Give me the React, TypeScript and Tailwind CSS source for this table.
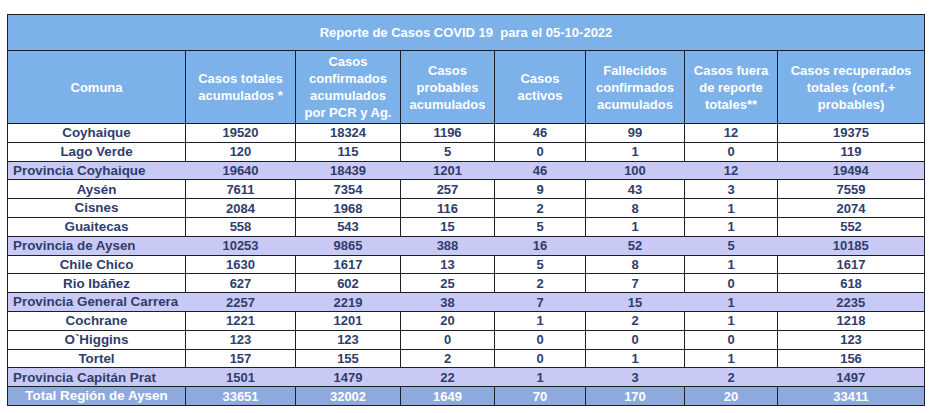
import React from "react";

type Row = {
  name: string;
  kind: "comuna" | "prov" | "total";
  v: number[];
};

const rows: Row[] = [
  { name: "Coyhaique", kind: "comuna", v: [19520, 18324, 1196, 46, 99, 12, 19375] },
  { name: "Lago Verde", kind: "comuna", v: [120, 115, 5, 0, 1, 0, 119] },
  { name: "Provincia Coyhaique", kind: "prov", v: [19640, 18439, 1201, 46, 100, 12, 19494] },
  { name: "Aysén", kind: "comuna", v: [7611, 7354, 257, 9, 43, 3, 7559] },
  { name: "Cisnes", kind: "comuna", v: [2084, 1968, 116, 2, 8, 1, 2074] },
  { name: "Guaitecas", kind: "comuna", v: [558, 543, 15, 5, 1, 1, 552] },
  { name: "Provincia de Aysen", kind: "prov", v: [10253, 9865, 388, 16, 52, 5, 10185] },
  { name: "Chile Chico", kind: "comuna", v: [1630, 1617, 13, 5, 8, 1, 1617] },
  { name: "Rio Ibáñez", kind: "comuna", v: [627, 602, 25, 2, 7, 0, 618] },
  { name: "Provincia General Carrera", kind: "prov", v: [2257, 2219, 38, 7, 15, 1, 2235] },
  { name: "Cochrane", kind: "comuna", v: [1221, 1201, 20, 1, 2, 1, 1218] },
  { name: "O`Higgins", kind: "comuna", v: [123, 123, 0, 0, 0, 0, 123] },
  { name: "Tortel", kind: "comuna", v: [157, 155, 2, 0, 1, 1, 156] },
  { name: "Provincia Capitán Prat", kind: "prov", v: [1501, 1479, 22, 1, 3, 2, 1497] },
  { name: "Total Región de Aysen", kind: "total", v: [33651, 32002, 1649, 70, 170, 20, 33411] },
];

const headers = [
  ["Comuna"],
  ["Casos totales", "acumulados *"],
  ["Casos", "confirmados", "acumulados", "por PCR y Ag."],
  ["Casos", "probables", "acumulados"],
  ["Casos", "activos"],
  ["Fallecidos", "confirmados", "acumulados"],
  ["Casos fuera", "de reporte", "totales**"],
  ["Casos recuperados", "totales (conf.+", "probables)"],
];

const widths = [178, 110, 105, 94, 91, 99, 93, 147];

export default function App() {
  return (
    <div className="w-[939px] h-[413px] bg-white pt-[14px] pl-[7px]" style={{ fontFamily: '"Liberation Sans", Arial, sans-serif' }}>
      <table className="table-fixed border-collapse w-[917px] font-bold text-[13px]">
        <colgroup>
          {widths.map((w, i) => (
            <col key={i} style={{ width: w }} />
          ))}
        </colgroup>
        <thead>
          <tr className="h-[36px] bg-[#7db1ea]">
            <th colSpan={8} className="border border-[#1c1f2a] text-white text-center font-bold whitespace-pre">
              {"Reporte de Casos COVID 19  para el 05-10-2022"}
            </th>
          </tr>
          <tr className="h-[73px] bg-[#7db1ea]">
            {headers.map((h, i) => (
              <th key={i} className="border border-[#1c1f2a] text-white text-center font-bold leading-[17px] px-1">
                {h.map((l, j) => (
                  <div key={j}>{l}</div>
                ))}
              </th>
            ))}
          </tr>
        </thead>
        <tbody>
          {rows.map((r, i) => {
            const isProv = r.kind === "prov";
            const isTotal = r.kind === "total";
            const bg = isProv ? "bg-[#c9c9f6]" : isTotal ? "bg-[#8eaadd]" : "bg-white";
            const txt = isTotal ? "text-white" : "text-[#2f3d6c]";
            return (
              <tr key={i} className={`h-[18.8px] leading-none ${bg} ${txt}`}>
                <td
                  className={`border-y border-l border-[#1c1f2a] text-[13.4px] ${isProv ? "text-left pl-[5px] border-r-0" : "text-center border-r"}`}
                >
                  {r.name}
                </td>
                {r.v.map((n, j) => (
                  <td
                    key={j}
                    className={`border-y border-[#1c1f2a] text-center ${
                      isProv ? (j === 6 ? "border-r" : "border-x-0") : "border-x"
                    }`}
                  >
                    {n}
                  </td>
                ))}
              </tr>
            );
          })}
        </tbody>
      </table>
    </div>
  );
}
